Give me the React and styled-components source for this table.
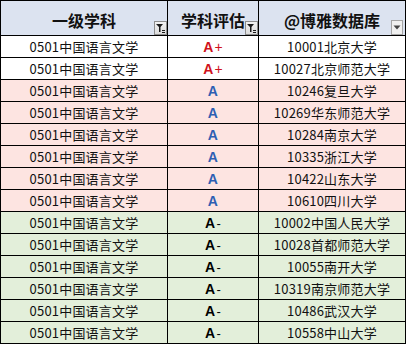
import React from 'react';
import styled, {createGlobalStyle, css} from 'styled-components';

const GlobalStyle = createGlobalStyle`
    body {
        margin: 0;
        background: #ffffff;
        font-family: "Noto Sans CJK SC", "DejaVu Sans", sans-serif;
    }
`

const bandColors = {
    white: '#ffffff',
    pink: '#fde4e1',
    green: '#e3efda',
}

const gradeColors = {
    'A+': '#d0121b',
    'A': '#2d5fb3',
    'A-': '#000000',
}

const Sheet = styled.div`
    display: grid;
    grid-template-columns: 166px 90px 146px;
    grid-auto-rows: 21px;
    grid-template-rows: 34px;
    gap: 1px;
    width: max-content;
    background: #000;
    border: 1px solid #000;
`

const HeaderCell = styled.div`
    position: relative;
    display: flex;
    align-items: center;
    justify-content: center;
    padding-top: 3px;
    background: #dce3f0;
    font-size: 16px;
    font-weight: 700;
    color: #111;
`

const Cell = styled.div`
    display: flex;
    align-items: center;
    justify-content: center;
    background: ${props => bandColors[props.band]};
    font-size: 13px;
    color: #111;
    letter-spacing: 0.2px;
`

const Grade = styled.span`
    font-family: "Liberation Sans", Arial, sans-serif;
    font-size: 14px;
    font-weight: 700;
    color: ${props => gradeColors[props.grade]};
`

const Sign = styled.span`
    font-weight: 400;
    margin-left: 1px;
    ${props => props.minus && css`
    font-size: 13px;
    `}
`

const FilterButton = styled.div`
    position: absolute;
    right: 0;
    bottom: 0;
    width: 13px;
    height: 14px;
    box-sizing: border-box;
    border: 1px solid #8e8e8e;
    background: linear-gradient(#f2f2f2, #dcdcdc);
    display: flex;
    align-items: center;
    justify-content: center;
    ${props => props.dropdown && css`
    right: 2px;
    width: 12px;
    height: 15px;
    background: #f0f0f0;
    border-color: #a6a6a6;
    `}
`

const FunnelIcon = () => (
    <svg width="11" height="12" viewBox="0 0 11 12">
        <path d="M1 2 H8 L5.5 5 V10 H4 V5 Z" fill="#1a1a1a" />
        <rect x="7" y="8" width="3" height="1" fill="#1a1a1a" />
        <rect x="7" y="10" width="3" height="1" fill="#1a1a1a" />
    </svg>
)

const ArrowIcon = () => (
    <svg width="8" height="5" viewBox="0 0 8 5">
        <path d="M0.5 0.5 H7.5 L4 4.5 Z" fill="#444" />
    </svg>
)

const universities = [
    ['10001北京大学', 'A+', 'white'],
    ['10027北京师范大学', 'A+', 'white'],
    ['10246复旦大学', 'A', 'pink'],
    ['10269华东师范大学', 'A', 'pink'],
    ['10284南京大学', 'A', 'pink'],
    ['10335浙江大学', 'A', 'pink'],
    ['10422山东大学', 'A', 'pink'],
    ['10610四川大学', 'A', 'pink'],
    ['10002中国人民大学', 'A-', 'green'],
    ['10028首都师范大学', 'A-', 'green'],
    ['10055南开大学', 'A-', 'green'],
    ['10319南京师范大学', 'A-', 'green'],
    ['10486武汉大学', 'A-', 'green'],
    ['10558中山大学', 'A-', 'green'],
]

const GradeLabel = ({grade}) => (
    <Grade grade={grade}>
        A{grade.length > 1 && <Sign minus={grade === 'A-'}>{grade[1]}</Sign>}
    </Grade>
)

const App = () => {
    return (
        <>
            <GlobalStyle />
            <Sheet>
                <HeaderCell>
                    一级学科
                    <FilterButton><FunnelIcon /></FilterButton>
                </HeaderCell>
                <HeaderCell>
                    学科评估
                    <FilterButton><FunnelIcon /></FilterButton>
                </HeaderCell>
                <HeaderCell>
                    @博雅数据库
                    <FilterButton dropdown><ArrowIcon /></FilterButton>
                </HeaderCell>
                {universities.map(([school, grade, band]) => (
                    <React.Fragment key={school}>
                        <Cell band={band}>0501中国语言文学</Cell>
                        <Cell band={band}><GradeLabel grade={grade} /></Cell>
                        <Cell band={band}>{school}</Cell>
                    </React.Fragment>
                ))}
            </Sheet>
        </>
    );
}

export default App;
